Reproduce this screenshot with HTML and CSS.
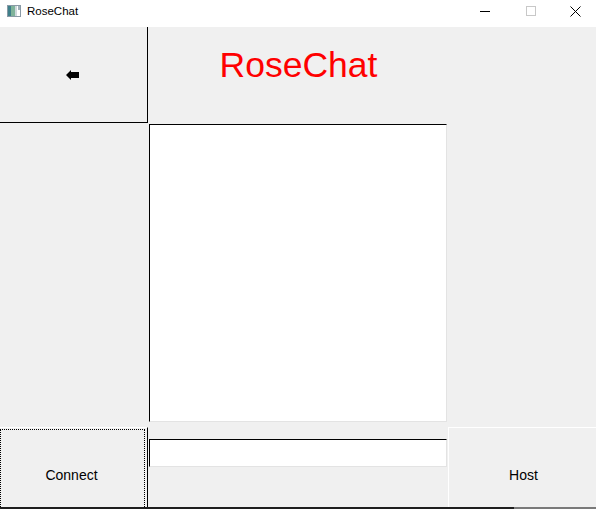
FILE: index.html
```html
<!DOCTYPE html>
<html>
<head>
<meta charset="utf-8">
<title>RoseChat</title>
<link rel="stylesheet" href="styles.css">
</head>
<body>
<div class="window">
  <div class="titlebar">
    <svg class="app-icon" width="14" height="12" viewBox="0 0 14 12">
      <rect x="0.5" y="0.5" width="13" height="11" fill="#fff" stroke="#8a9aa6"/>
      <rect x="1" y="1" width="3" height="10" fill="#3f7f8a"/>
      <rect x="4" y="1" width="4" height="10" fill="#7fb39a"/>
      <rect x="8" y="1" width="2" height="10" fill="#cfd8dc"/>
      <rect x="11" y="1" width="2" height="4" fill="#9fb0b8"/>
    </svg>
    <span class="title-text">RoseChat</span>
    <div class="controls">
      <div class="ctl">
        <svg width="10" height="10" viewBox="0 0 10 10"><rect x="0" y="5" width="10" height="1" fill="#000"/></svg>
      </div>
      <div class="ctl">
        <svg width="10" height="10" viewBox="0 0 10 10"><rect x="0.5" y="0.5" width="9" height="9" fill="none" stroke="#c8c8c8"/></svg>
      </div>
      <div class="ctl ctl-close">
        <svg width="11" height="11" viewBox="0 0 11 11"><path d="M0.5 0.5 L10.5 10.5 M10.5 0.5 L0.5 10.5" stroke="#000" stroke-width="1"/></svg>
      </div>
    </div>
  </div>
  <div class="content">
    <div class="back-btn">
      <svg width="13" height="10" viewBox="0 0 13 10"><polygon points="0,5 5,0 5,2 13,2 13,8 5,8 5,10" fill="#000"/></svg>
    </div>
    <div class="heading"><span>RoseChat</span></div>
    <div class="empty-right"></div>
    <div class="empty-left"></div>
    <div class="chat-log"></div>
    <div class="connect-btn"><div class="focus-ring"><span>Connect</span></div></div>
    <div class="entry-cell"><div class="entry"></div></div>
    <div class="host-btn"><span>Host</span></div>
    <div class="bottom-bar"><div class="bar-dark"></div><div class="bar-grey"></div></div>
  </div>
</div>
</body>
</html>
```
FILE: styles.css
```css
* { box-sizing: border-box; }
html, body { margin: 0; padding: 0; }
body {
  width: 596px;
  height: 509px;
  overflow: hidden;
  background: #f0f0f0;
  font-family: "Liberation Sans", Arial, sans-serif;
}
.window {
  display: flex;
  flex-direction: column;
  width: 596px;
  height: 509px;
}
.titlebar {
  height: 27px;
  background: #fff;
  display: flex;
  align-items: flex-start;
}
.app-icon {
  margin: 5px 0 0 7px;
  flex: none;
}
.title-text {
  margin: 4px 0 0 6px;
  font-size: 11.5px;
  line-height: 14px;
  color: #000;
}
.controls {
  margin-left: auto;
  display: flex;
  height: 22px;
}
.ctl {
  width: 46px;
  display: flex;
  align-items: center;
  justify-content: center;
  padding-top: 0;
}
.ctl-close { width: 42px; }
.content {
  flex: 1;
  display: grid;
  grid-template-columns: 148px 300px 148px;
  grid-template-rows: 96px 304px 80px 2px;
  background: #f0f0f0;
}
.back-btn {
  grid-column: 1;
  grid-row: 1;
  border-right: 1px solid #000;
  border-bottom: 1px solid #000;
  display: flex;
  align-items: center;
  justify-content: center;
  padding-right: 2px;
}
.heading {
  grid-column: 2;
  grid-row: 1;
  display: flex;
  justify-content: center;
  padding-top: 21px;
}
.heading span {
  color: #ff0000;
  font-size: 35.5px;
  line-height: 1;
  margin-left: 1px;
}
.empty-right { grid-column: 3; grid-row: 1 / span 2; }
.empty-left { grid-column: 1; grid-row: 2; }
.chat-log {
  grid-column: 2;
  grid-row: 2;
  margin: 1px 0 0 1px;
  width: 298px;
  height: 298px;
  background: #fff;
  border-top: 1px solid #000;
  border-left: 1px solid #000;
  border-right: 1px solid #e3e3e3;
  border-bottom: 1px solid #e3e3e3;
}
.connect-btn {
  grid-column: 1;
  grid-row: 3;
  border-top: 1px solid #fff;
  border-right: 1px solid #000;
  padding: 1px 2px 0 0;
}
.focus-ring {
  height: 100%;
  border-top: 1px dotted #000;
  border-left: 1px dotted #000;
  border-right: 1px dotted #000;
  display: flex;
  justify-content: center;
  padding-top: 37px;
  font-size: 14px;
  line-height: 16px;
  color: #000;
}
.focus-ring span { margin-left: -2px; }
.entry-cell {
  grid-column: 2;
  grid-row: 3;
  padding: 12px 0 0 1px;
}
.entry {
  width: 298px;
  height: 28px;
  background: #fff;
  border-top: 1px solid #000;
  border-left: 1px solid #000;
  border-right: 1px solid #e3e3e3;
  border-bottom: 1px solid #e3e3e3;
}
.host-btn {
  grid-column: 3;
  grid-row: 3;
  border-top: 1px solid #fff;
  border-left: 1px solid #fff;
  display: flex;
  justify-content: center;
  padding-top: 39px;
  font-size: 14px;
  line-height: 16px;
  color: #000;
}
.host-btn span { margin-left: 2px; }
.bottom-bar {
  grid-column: 1 / span 3;
  grid-row: 4;
  display: flex;
}
.bar-dark { width: 514px; background: #1e1e1e; }
.bar-grey { flex: 1; background: #7a7a7a; }
```
